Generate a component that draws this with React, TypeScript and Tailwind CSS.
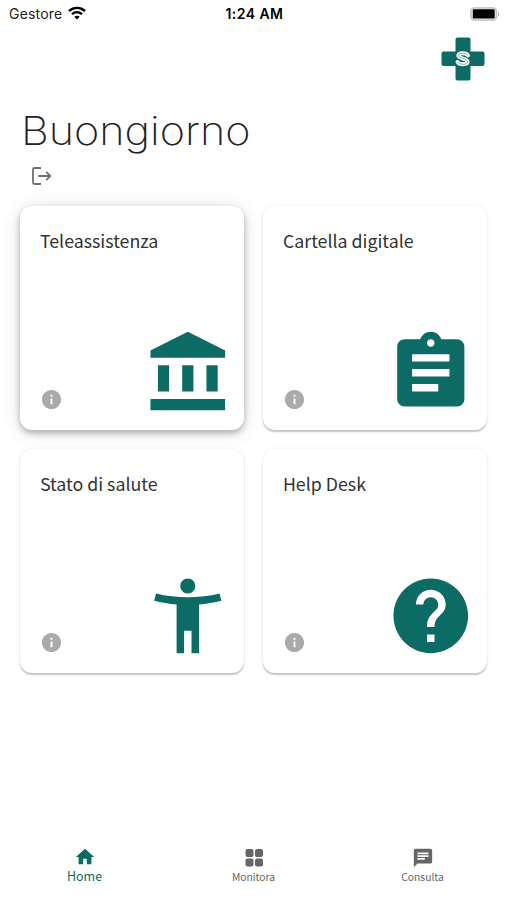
import type { ReactNode } from 'react';
import { MdAccountBalance, MdAssignment, MdAccessibilityNew, MdHelp, MdInfo, MdHome, MdChat } from 'react-icons/md';

const cards = [
  { title: 'Teleassistenza', icon: MdAccountBalance, active: true },
  { title: 'Cartella digitale', icon: MdAssignment, active: false },
  { title: 'Stato di salute', icon: MdAccessibilityNew, active: false },
  { title: 'Help Desk', icon: MdHelp, active: false },
];

function StatusBar() {
  return (
    <div className="grid grid-cols-3 items-center h-7 pl-[9px] pr-[7px] font-['Inter',sans-serif] text-[14px] leading-7 text-black">
      <div className="flex items-center gap-[6px]">
        <span className="tracking-[0.2px] text-[#222]">Gestore</span>
        <svg width="18" height="14" viewBox="0 0 18 14" fill="none" stroke="#000" strokeWidth="2.4" className="-mt-[2px]">
          <path d="M1 5C5.500.8 12.500.8 17 5" />
          <path d="M4 8.200C7 5.500 11 5.500 14 8.200" />
          <path d="M9 13.500L6.300 10.800C7.800 9.500 10.200 9.500 11.700 10.800Z" fill="#000" stroke="none" />
        </svg>
      </div>
      <div className="text-center font-semibold tracking-[0.45px]">1:24 AM</div>
      <div className="flex justify-end">
        <svg width="30" height="14" viewBox="0 0 30 14" className="-mt-px">
          <rect x="0.900" y="0.900" width="25.600" height="12.200" rx="3.500" fill="#e8e8e8" stroke="#bdbdbd" strokeWidth="1.400" />
          <rect x="2.800" y="2.300" width="21.900" height="9.200" rx="1.200" fill="#000" />
          <path d="M28 4.500c1.500.8 1.500 4.200 0 5z" fill="#b5b5b5" />
        </svg>
      </div>
    </div>
  );
}

function Logo() {
  const s = 'M27 18.500C25.300 15.300 17.300 15.600 17.300 18.600C17.300 21.800 26.600 21.400 26.600 24.800C26.600 28 18.600 28.200 16.500 25';

  return (
    <svg width="44" height="44" viewBox="0 0 44 44">
      <path
        d="M16.500 0.500h11a2 2 0 0 1 2 2v12h12a2 2 0 0 1 2 2v10.500a2 2 0 0 1-2 2h-12v12.500a2 2 0 0 1-2 2h-11a2 2 0 0 1-2-2v-12.500h-12a2 2 0 0 1-2-2v-10.500a2 2 0 0 1 2-2h12v-12a2 2 0 0 1 2-2z"
        fill="#0c6b64"
      />
      <path d={s} fill="none" stroke="#fff" strokeWidth="3.900" strokeLinecap="round" />
      <path d={s} fill="none" stroke="#0c6b64" strokeWidth="0.500" />
    </svg>
  );
}

function NavItem({ label, icon, active }: { label: string; icon: ReactNode; active?: boolean }) {
  return (
    <a className={`flex flex-1 flex-col items-center ${active ? 'text-[#0c6b64]' : 'text-[#666]'}`}>
      <span className="flex h-[22px] items-center">{icon}</span>
      <span className={active ? 'text-[12.500px] leading-[16px]' : 'text-[10.300px] leading-[17px]'}>{label}</span>
    </a>
  );
}

export default function App() {
  return (
    <div className="flex flex-col w-[507px] h-[900px] bg-white overflow-hidden font-['Noto_Sans_CJK_SC',sans-serif] text-[#333]">
      <StatusBar />

      <header className="flex flex-col px-[22px]">
        <div className="flex justify-end h-[77px] pt-[9px]">
          <Logo />
        </div>
        <h1 className="h-[52px] origin-left scale-x-[1.105] -ml-[1.500px] font-['Inter',sans-serif] font-extralight text-[39px] leading-[52px] whitespace-nowrap text-[#222]">
          Buongiorno
        </h1>
        <button className="flex h-[49px] pt-[9px] pl-[9px]">
          <svg width="22" height="20" viewBox="0 0 22 20" fill="none" stroke="#707070" strokeWidth="1.800">
            <path d="M10 2H3.500A1.500 1.500 0 0 0 2 3.500V16.500A1.500 1.500 0 0 0 3.500 18H10M7.500 10H19M15.200 5.800L19.400 10L15.200 14.200" />
          </svg>
        </button>
      </header>

      {/* Card */}
      <main className="grid grid-cols-2 gap-x-[19px] gap-y-[19px] pl-[20.400px] pr-[19.600px]">
        {cards.map(({ title, icon: Icon, active }) => (
          <section
            key={title}
            className={`flex flex-col justify-between h-[224px] rounded-xl bg-white ${
              active
                ? 'shadow-[0_3px_6px_rgba(0,0,0,0.28),0_2px_20px_rgba(0,0,0,0.12)]'
                : 'shadow-[0_1.500px_1.500px_rgba(0,0,0,0.22),0_0_5px_rgba(0,0,0,0.05)]'
            }`}
          >
            <h2 className="pt-5 pl-[19.500px] text-[17.800px] leading-7">{title}</h2>
            <div className="flex items-end justify-between pl-5 pr-[11.500px] pb-3">
              <MdInfo className="mb-[7px] size-[23px] text-[#aaa]" />
              <Icon className="size-[89.600px] text-[#0c6b64]" />
            </div>
          </section>
        ))}
      </main>

      <nav className="mt-auto flex h-[54px]">
        <NavItem label="Home" active icon={<MdHome className="size-[22px]" />} />
        <NavItem
          label="Monitora"
          icon={
            <svg width="18" height="18" viewBox="0 0 18 18" fill="currentColor" className="mt-[2px]">
              <rect x="0.500" width="8" height="8" rx="2" />
              <rect x="10" width="8" height="8" rx="2" />
              <rect x="0.500" y="9.500" width="8" height="8" rx="2" />
              <rect x="10" y="9.500" width="8" height="8" rx="2" />
            </svg>
          }
        />
        <NavItem label="Consulta" icon={<MdChat className="mt-[2px] size-[22px]" />} />
      </nav>
    </div>
  );
}
